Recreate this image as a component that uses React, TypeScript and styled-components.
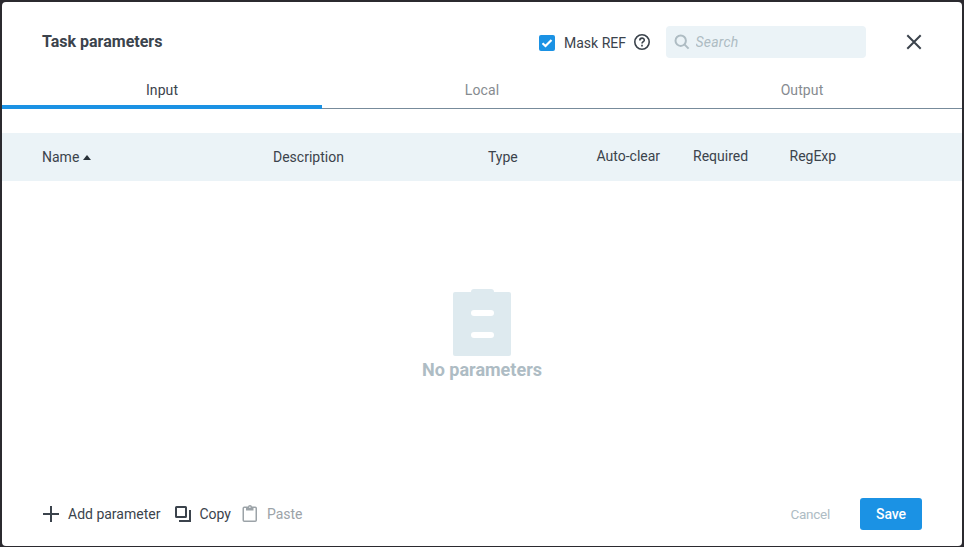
import React from "react";
import styled, { createGlobalStyle } from "styled-components";

const GlobalStyle = createGlobalStyle`
  *, *::before, *::after { box-sizing: border-box; }
  body {
    margin: 0;
    background: #2b2a2f;
    font-family: Roboto, "Liberation Sans", sans-serif;
    font-size: 14px;
    line-height: 20px;
    color: #3b434c;
  }
  button, input { font: inherit; color: inherit; }
`;

const Backdrop = styled.div`
  height: 547px;
  padding: 2px 2px 1px;
  background: #2b2a2f;
`;

const Dialog = styled.section`
  display: flex;
  flex-direction: column;
  height: 544px;
  background: #fff;
  border-radius: 4px;
  overflow: hidden;
`;

const Header = styled.header`
  display: flex;
  align-items: center;
  height: 80px;
  padding: 0 39px 0 40px;
`;

const Title = styled.h1`
  margin: 0;
  flex: 1;
  font-size: 16px;
  font-weight: 700;
  line-height: 24px;
`;

const MaskOption = styled.label`
  display: flex;
  align-items: center;
  height: 20px;
  margin: 2px 16px 0 0;
`;

const CheckBox = styled.span`
  display: flex;
  width: 16px;
  height: 16px;
  margin-right: 9px;
  border-radius: 2px;
  background: #1b92e4;
`;

const HelpIcon = styled.svg`
  margin: -2px 0 0 8px;
`;

const SearchField = styled.div`
  display: flex;
  align-items: center;
  width: 200px;
  height: 32px;
  padding-left: 8px;
  border-radius: 4px;
  background: #ebf3f7;
`;

const SearchInput = styled.input`
  width: 150px;
  margin-left: 5.5px;
  padding: 0;
  border: 0;
  outline: 0;
  background: none;
  font-style: italic;
  letter-spacing: 0.2px;
  &::placeholder { color: #aebcc3; opacity: 1; }
`;

const IconButton = styled.button`
  display: flex;
  margin-left: 39px;
  padding: 0;
  border: 0;
  background: none;
`;

const Tabs = styled.nav`
  display: grid;
  grid-template-columns: repeat(3, 1fr);
  height: 27px;
  flex: none;
`;

const Tab = styled.button<{ $active?: boolean }>`
  position: relative;
  height: 27px;
  padding: 0 0 11px;
  border: 0;
  border-bottom: 1px solid #778b9b;
  background: none;
  line-height: 16px;
  letter-spacing: 0.1px;
  color: ${(p) => (p.$active ? "#3b434c" : "#868b90")};
  &::after {
    content: "";
    display: ${(p) => (p.$active ? "block" : "none")};
    position: absolute;
    left: 0;
    right: 0;
    bottom: -1px;
    height: 4px;
    background: #1b92e4;
  }
`;

const TableHeader = styled.div`
  display: grid;
  grid-template-columns: 231px 215px 108.5px 96.5px 96.5px 1fr;
  align-items: center;
  flex: none;
  height: 48px;
  margin-top: 24px;
  padding: 0 40px;
  background: #ebf3f7;
`;

const Column = styled.span<{ $raised?: boolean }>`
  display: flex;
  align-items: center;
  padding-bottom: ${(p) => (p.$raised ? "2px" : "0")};
`;

const SortIcon = styled.svg`
  margin: 1px 0 0 3.4px;
`;

const Empty = styled.main`
  display: flex;
  flex-direction: column;
  align-items: center;
  flex: 1;
  padding-top: 108px;
`;

const EmptyText = styled.p`
  margin: 2px 0 0;
  font-size: 18px;
  font-weight: 700;
  line-height: 24px;
  color: #aebcc4;
`;

const Footer = styled.footer`
  display: flex;
  align-items: center;
  height: 64px;
  padding: 0 40px;
`;

const Action = styled.button<{ $gap: number; $after: number; $disabled?: boolean }>`
  display: flex;
  align-items: center;
  gap: ${(p) => p.$gap}px;
  margin-right: ${(p) => p.$after}px;
  padding: 0;
  border: 0;
  background: none;
  color: ${(p) => (p.$disabled ? "#9ca3a8" : "#3b434c")};
`;

const Spacer = styled.span`
  flex: 1;
`;

const CancelButton = styled.button`
  margin-right: 30px;
  padding: 0;
  border: 0;
  background: none;
  color: #aebcc4;
  font-size: 13.5px;
  letter-spacing: -0.25px;
`;

const SaveButton = styled.button`
  width: 62px;
  height: 32px;
  padding: 0;
  border: 0;
  border-radius: 3px;
  background: #1b92e4;
  color: #fff;
  font-weight: 500;
  letter-spacing: -0.1px;
`;

export default function App() {
  return (
    <Backdrop>
      <GlobalStyle />
      <Dialog role="dialog" aria-label="Task parameters">
        <Header>
          <Title>Task parameters</Title>
          <MaskOption>
            <CheckBox>
              <svg width="16" height="16" fill="none" stroke="#fff" strokeWidth="2.2">
                <path d="M3.5 8.2 6.5 11 12.5 5" />
              </svg>
            </CheckBox>
            Mask REF
            <HelpIcon width="16" height="16" viewBox="0 0 16 16" fill="none" stroke="#3b434c">
              <circle cx="8" cy="8" r="7.2" strokeWidth="1.6" />
              <path d="M5.8 6.4C5.8 3.4 10.3 3.4 10.3 6.2 10.3 7.7 8 7.8 8 9.6" strokeWidth="1.6" />
              <path d="M8 10.8v1.6" strokeWidth="1.7" />
            </HelpIcon>
          </MaskOption>
          <SearchField>
            <svg width="16" height="16" fill="none" stroke="#aebcc3" strokeWidth="2">
              <circle cx="6.7" cy="6.7" r="5.2" />
              <path d="m10.4 10.4 4.2 4.2" />
            </svg>
            <SearchInput placeholder="Search" aria-label="Search" />
          </SearchField>
          <IconButton aria-label="Close">
            <svg width="18" height="18" fill="none" stroke="#3b434c" strokeWidth="2">
              <path d="m2.3 2.3 13.4 13.4M15.7 2.3 2.3 15.7" />
            </svg>
          </IconButton>
        </Header>
        <Tabs>
          <Tab $active>Input</Tab>
          <Tab>Local</Tab>
          <Tab>Output</Tab>
        </Tabs>
        <TableHeader>
          <Column>
            Name
            <SortIcon width="8" height="5" fill="#293139">
              <path d="M0 5 4 0 8 5Z" />
            </SortIcon>
          </Column>
          <Column>Description</Column>
          <Column>Type</Column>
          <Column $raised>Auto-clear</Column>
          <Column $raised>Required</Column>
          <Column $raised>RegExp</Column>
        </TableHeader>
        <Empty>
          <svg width="58" height="67">
            <path
              d="M2 3H18Q18 0 21 0H38Q41 0 41 3H56Q58 3 58 5V65Q58 67 56 67H2Q0 67 0 65V5Q0 3 2 3Z"
              fill="#deeaef"
            />
            <rect x="18" y="21" width="23" height="6" rx="3" fill="#fff" />
            <rect x="18" y="43" width="23" height="6" rx="3" fill="#fff" />
          </svg>
          <EmptyText>No parameters</EmptyText>
        </Empty>
        <Footer>
          <Action $gap={8} $after={14}>
            <svg width="18" height="18" stroke="#3b434c" strokeWidth="2">
              <path d="M1 9h16M9 1v16" />
            </svg>
            Add parameter
          </Action>
          <Action $gap={7} $after={11}>
            <svg width="18" height="18" fill="none" stroke="#3b434c" strokeWidth="2">
              <rect x="2" y="2" width="10" height="10" rx="0.5" />
              <path d="M16 5v11H5" />
            </svg>
            Copy
          </Action>
          <Action $gap={9} $after={0} $disabled>
            <svg width="16" height="18" fill="none" stroke="#9ca3a8" strokeWidth="1.5">
              <rect x="1.25" y="2.25" width="13" height="14" rx="1" />
              <path d="M4 2H6a2 2 0 0 1 4 0h1.5V5.5H4Z" fill="#9ca3a8" stroke="none" />
              <circle cx="7.9" cy="2.3" r=".7" fill="#fff" stroke="none" />
            </svg>
            Paste
          </Action>
          <Spacer />
          <CancelButton>Cancel</CancelButton>
          <SaveButton>Save</SaveButton>
        </Footer>
      </Dialog>
    </Backdrop>
  );
}
